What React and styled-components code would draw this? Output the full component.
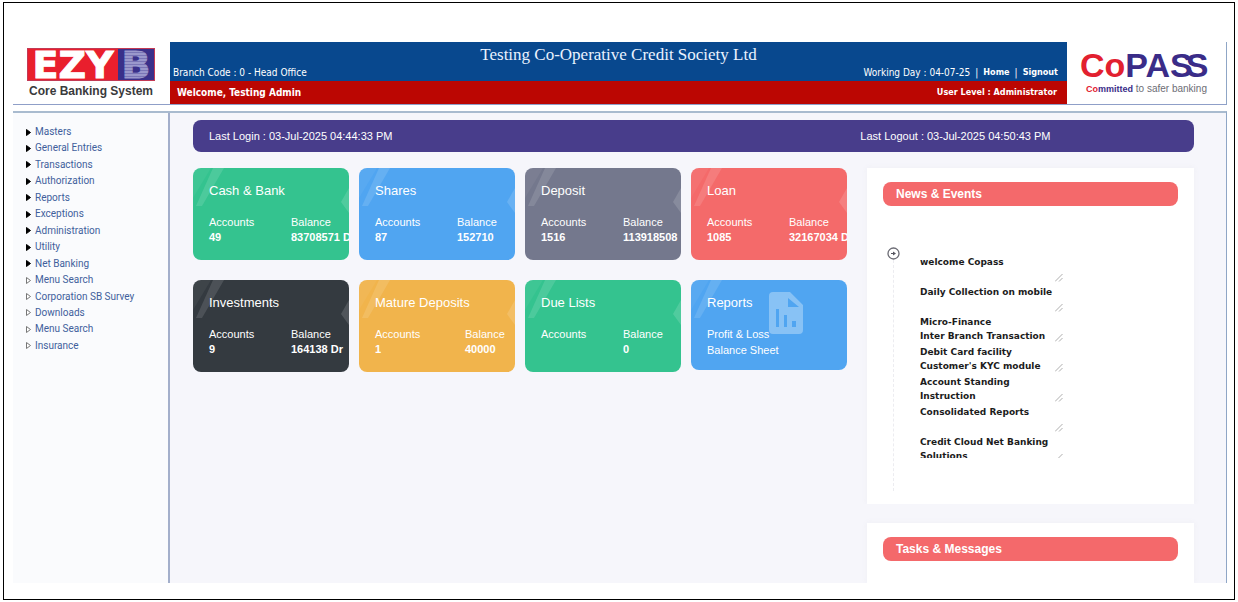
import React from "react";
import styled, { createGlobalStyle, css } from "styled-components";

const tahoma = `"DejaVu Sans Condensed", "DejaVu Sans", sans-serif`;
const arial = `"Liberation Sans", Arial, sans-serif`;

const Global = createGlobalStyle`
  *, *::before, *::after { box-sizing: border-box; }
  body { margin: 0; background: #fff; font-family: ${arial}; }
  h1, h2, p, ul, dl, dd { margin: 0; padding: 0; }
  a { color: inherit; text-decoration: none; }
`;

const Frame = styled.div`
  display: flex;
  flex-direction: column;
  min-height: calc(100vh - 4px);
  margin: 2px 3px;
  padding: 39px 7px 16px 9px;
  border: 1px solid #000;
`;

const Header = styled.header`
  display: flex;
  height: 63px;
  border-right: 1px solid #8fa6c6;
  border-bottom: 1px solid #8f9fc8;
`;

const EzyLogo = styled.div`
  flex: 0 0 157px;
  padding: 6px 0 0 14px;
`;

const EzyMark = styled.div`
  display: flex;
  width: 128px;
  height: 33px;
  font: bold 38px/32px "DejaVu Sans", sans-serif;
  color: #fff;
  border: 1px solid #c33a55;
`;

const EzyRed = styled.span`
  flex: 1;
  background: #e91f2d;
  text-align: center;
  -webkit-text-stroke: 1px #fff;
`;

const EzyBlue = styled.span`
  position: relative;
  width: 36px;
  background: #39308a;
  color: #9a98cc;
  text-align: center;
  -webkit-text-stroke: 1px #9a98cc;
  &::after {
    content: "";
    position: absolute;
    inset: 0;
    background: repeating-linear-gradient(#39308a55 0 1px, transparent 1px 3px);
  }
`;

const EzyCaption = styled.p`
  width: 128px;
  text-align: center;
  white-space: nowrap;
  font: bold 12px/20px ${arial};
  color: #3a3a3c;
`;

const Banner = styled.div`
  flex: 1;
  display: flex;
  flex-direction: column;
  color: #fff;
`;

const BlueBand = styled.div`
  height: 39px;
  padding-top: 3px;
  background: #08488e;
`;

const Society = styled.h1`
  text-align: center;
  font: normal 17px/19px "Liberation Serif", serif;
  color: #eaf2ff;
`;

const BandRow = styled.div`
  display: flex;
  justify-content: space-between;
  padding: 0 9px 0 3px;
  font: 10px/17px ${tahoma};
`;

const Links = styled.nav`
  display: flex;
  gap: 5px;
  a { font-weight: bold; font-size: 9px; }
`;

const RedBand = styled.div`
  flex: 1;
  display: flex;
  justify-content: space-between;
  padding: 3px 10px 0 7px;
  background: #bb0602;
  font: bold 10px/17px ${tahoma};
`;

const UserLevel = styled.span`
  font-size: 9px;
`;

const CopassLogo = styled.div`
  flex: 0 0 159px;
  padding: 6px 0 0 13px;
  white-space: nowrap;
`;

const CopassMark = styled.div`
  font: bold 34px/34px ${arial};
  color: #3a2c88;
`;

const Red = styled.span`
  color: #e2202f;
`;

const LastS = styled.span`
  margin-left: -7px;
`;

const CopassTag = styled.p`
  padding-left: 6px;
  font: 10px/14px ${arial};
  color: #6d6d75;
  b { font-size: 9px; color: #3a2c88; }
`;

const Body = styled.div`
  flex: 1;
  display: flex;
  margin-top: 6px;
  border-top: 2px solid #a9bbcf;
  border-right: 1px solid #8fa6c6;
`;

const Sidebar = styled.nav`
  flex: 0 0 157px;
  padding: 11px 0 0 13px;
  background: #fafbfd;
  border-right: 2px solid #a3afcb;
`;

const Menu = styled.ul`
  display: flex;
  flex-direction: column;
  justify-content: space-between;
  min-height: 230px;
  list-style: none;
`;

const MenuLink = styled.a`
  display: flex;
  align-items: center;
  gap: 4px;
  font: 10px/16px Roboto, sans-serif;
  color: #3f5f9c;
`;

const Main = styled.main`
  flex: 1;
  display: flex;
  flex-direction: column;
  padding: 7px 32px 0 23px;
  background: #f6f6fb;
`;

const LoginBar = styled.div`
  display: grid;
  grid-template-columns: 2fr 1fr;
  border-radius: 8px;
  background: #483d8b;
  font: 11px/32px ${arial};
  color: #fff;
  span:first-child { padding-left: 16px; }
`;

const Columns = styled.div`
  flex: 1;
  display: grid;
  grid-template-columns: 2fr 1fr;
  gap: 20px;
  margin-top: 16px;
`;

const Cards = styled.div`
  display: grid;
  grid-template-columns: repeat(4, 1fr);
  gap: 20px 10px;
  align-content: start;
  align-items: start;
`;

const Card = styled.section`
  position: relative;
  overflow: hidden;
  height: ${(p) => (p.$short ? 90 : 92)}px;
  padding: 14px 0 0 16px;
  border-radius: 8px;
  background: ${(p) => p.$color};
  color: #fff;
`;

const Facets = styled.svg`
  position: absolute;
  top: 0;
  ${(p) => (p.$right ? css`right: 0;` : css`left: 0;`)}
`;

const CardTitle = styled.h2`
  position: relative;
  font: 13px/18px ${arial};
`;

const Figures = styled.dl`
  position: relative;
  display: grid;
  grid-template-columns: ${(p) => (p.$wide ? 90 : 82)}px auto;
  margin-top: 15px;
  white-space: nowrap;
  font: 11px/15px ${arial};
  dd { font-weight: bold; }
`;

const ReportLinks = styled.div`
  position: relative;
  display: flex;
  flex-direction: column;
  margin-top: 14px;
  font: 11px/16px ${arial};
`;

const ReportIcon = styled.svg`
  position: absolute;
  top: 12px;
  left: 78px;
`;

const Side = styled.div`
  display: flex;
  flex-direction: column;
  gap: 19px;
`;

const Panel = styled.section`
  flex: ${(p) => (p.$grow ? "1" : "0 0 auto")};
  padding: 14px 16px 13px;
  background: #fff;
  box-shadow: 0 0 6px #eeeef4;
  clip-path: inset(-6px -6px 0);
`;

const PanelTitle = styled.h2`
  padding-left: 13px;
  border-radius: 8px;
  background: #f4696b;
  font: bold 12px/24px ${arial};
  color: #fff;
`;

const Timeline = styled.div`
  display: flex;
  gap: 20px;
  margin-top: 41px;
  padding-left: 4px;
`;

const Rail = styled.div`
  display: flex;
  flex-direction: column;
  align-items: center;
  width: 13px;
  &::after {
    content: "";
    flex: 1;
    border-left: 1px dashed #ececf0;
  }
`;

const News = styled.ul`
  height: 211px;
  margin-bottom: 33px;
  padding-top: 5px;
  overflow: hidden;
  list-style: none;
`;

const NewsItem = styled.li`
  position: relative;
  width: 144px;
  height: 30px;
  svg { position: absolute; right: 1px; bottom: 0; }
`;

const NewsText = styled.textarea`
  display: block;
  width: 100%;
  height: 30px;
  padding: 3px 0 0;
  border: 0;
  outline: 0;
  resize: none;
  overflow: hidden;
  background: transparent;
  font: bold 9px/14px "DejaVu Sans", sans-serif;
  color: #1c1c1c;
`;

const menu = [
  ["Masters", true], ["General Entries", true], ["Transactions", true],
  ["Authorization", true], ["Reports", true], ["Exceptions", true],
  ["Administration", true], ["Utility", true], ["Net Banking", true],
  ["Menu Search"], ["Corporation SB Survey"], ["Downloads"],
  ["Menu Search"], ["Insurance"],
];

const cards = [
  { title: "Cash & Bank", color: "#34c38f", accounts: "49", balance: "83708571 Dr" },
  { title: "Shares", color: "#50a5f1", accounts: "87", balance: "152710" },
  { title: "Deposit", color: "#74788d", accounts: "1516", balance: "113918508" },
  { title: "Loan", color: "#f46a6a", accounts: "1085", balance: "32167034 Dr" },
  { title: "Investments", color: "#343a40", accounts: "9", balance: "164138 Dr" },
  { title: "Mature Deposits", color: "#f1b44c", accounts: "1", balance: "40000", wide: true },
  { title: "Due Lists", color: "#34c38f", accounts: "", balance: "0" },
];

const news = [
  "welcome Copass",
  "Daily Collection on mobile",
  "Micro-Finance\nInter Branch Transaction",
  "Debit Card facility\nCustomer's KYC module",
  "Account Standing\nInstruction",
  "Consolidated Reports",
  "Credit Cloud Net Banking\nSolutions",
];

function CardFacets({ right = true }) {
  return (
    <>
      <Facets width="34" height="40" aria-hidden="true">
        <path d="M0 0H18L0 30Z" fill="#fff" opacity=".05" />
        <path d="M20 0H31L9 38H3Z" fill="#fff" opacity=".12" />
      </Facets>
      {right && (
        <Facets $right width="8" height="50" aria-hidden="true">
          <path d="M8 20L0 34L8 45Z" fill="#fff" opacity=".14" />
        </Facets>
      )}
    </>
  );
}

export default function App() {
  return (
    <>
      <Global />
      <Frame>
        <Header>
          <EzyLogo>
            <EzyMark><EzyRed>EZY</EzyRed><EzyBlue>B</EzyBlue></EzyMark>
            <EzyCaption>Core Banking System</EzyCaption>
          </EzyLogo>
          <Banner>
            <BlueBand>
              <Society>Testing Co-Operative Credit Society Ltd</Society>
              <BandRow>
                <span>Branch Code : 0 - Head Office</span>
                <Links>
                  <span>Working Day : 04-07-25</span>
                  <span>|</span>
                  <a href="#home">Home</a>
                  <span>|</span>
                  <a href="#signout">Signout</a>
                </Links>
              </BandRow>
            </BlueBand>
            <RedBand>
              <span>Welcome, Testing Admin</span>
              <UserLevel>User Level : Administrator</UserLevel>
            </RedBand>
          </Banner>
          <CopassLogo>
            <CopassMark><Red>Co</Red>PAS<LastS>S</LastS></CopassMark>
            <CopassTag><b><Red>Co</Red>mmitted</b> to safer banking</CopassTag>
          </CopassLogo>
        </Header>
        <Body>
          <Sidebar>
            <Menu>
              {menu.map(([label, solid], i) => (
                <li key={i}>
                  <MenuLink href="#menu">
                    <svg width="5" height="7" viewBox="0 0 5 7" aria-hidden="true">
                      <path d="M.5 .5L4.5 3.5L.5 6.5Z" fill={solid ? "#000" : "#fff"} stroke={solid ? "#000" : "#777"} />
                    </svg>
                    {label}
                  </MenuLink>
                </li>
              ))}
            </Menu>
          </Sidebar>
          <Main>
            <LoginBar>
              <span>Last Login : 03-Jul-2025 04:44:33 PM</span>
              <span>Last Logout : 03-Jul-2025 04:50:43 PM</span>
            </LoginBar>
            <Columns>
              <Cards>
                {cards.map((c) => (
                  <Card key={c.title} $color={c.color}>
                    <CardFacets />
                    <CardTitle>{c.title}</CardTitle>
                    <Figures $wide={c.wide}>
                      <div><dt>Accounts</dt><dd>{c.accounts}</dd></div>
                      <div><dt>Balance</dt><dd>{c.balance}</dd></div>
                    </Figures>
                  </Card>
                ))}
                <Card $color="#50a5f1" $short>
                  <CardFacets right={false} />
                  <ReportIcon width="34" height="42" viewBox="0 0 34 42" aria-hidden="true">
                    <path fillRule="evenodd" d="M4 0H21L34 13V38Q34 42 30 42H4Q0 42 0 38V4Q0 0 4 0ZM19 6V15H30ZM7 17V35H10V17ZM15 23V35H18V23ZM23 29V35H27V29Z" fill="#fff" opacity=".32" />
                  </ReportIcon>
                  <CardTitle>Reports</CardTitle>
                  <ReportLinks>
                    <a href="#pl">Profit &amp; Loss</a>
                    <a href="#bs">Balance Sheet</a>
                  </ReportLinks>
                </Card>
              </Cards>
              <Side>
                <Panel>
                  <PanelTitle>News &amp; Events</PanelTitle>
                  <Timeline>
                    <Rail>
                      <svg width="13" height="13" viewBox="0 0 13 13" aria-hidden="true">
                        <circle cx="6.5" cy="6.5" r="5.5" fill="#fff" stroke="#6b6b74" strokeWidth="1.3" />
                        <path d="M4 6H6V4.5L9 6.5L6 8.5V7H4Z" fill="#55555e" />
                      </svg>
                    </Rail>
                    <News>
                      {news.map((text) => (
                        <NewsItem key={text}>
                          <NewsText readOnly aria-label="News item" defaultValue={text} />
                          <svg width="8" height="8" viewBox="0 0 8 8" aria-hidden="true">
                            <path d="M0 7.5L7.5 0M4 7.5L7.5 4" stroke="#999" strokeWidth=".8" />
                          </svg>
                        </NewsItem>
                      ))}
                    </News>
                  </Timeline>
                </Panel>
                <Panel $grow>
                  <PanelTitle>Tasks &amp; Messages</PanelTitle>
                </Panel>
              </Side>
            </Columns>
          </Main>
        </Body>
      </Frame>
    </>
  );
}
